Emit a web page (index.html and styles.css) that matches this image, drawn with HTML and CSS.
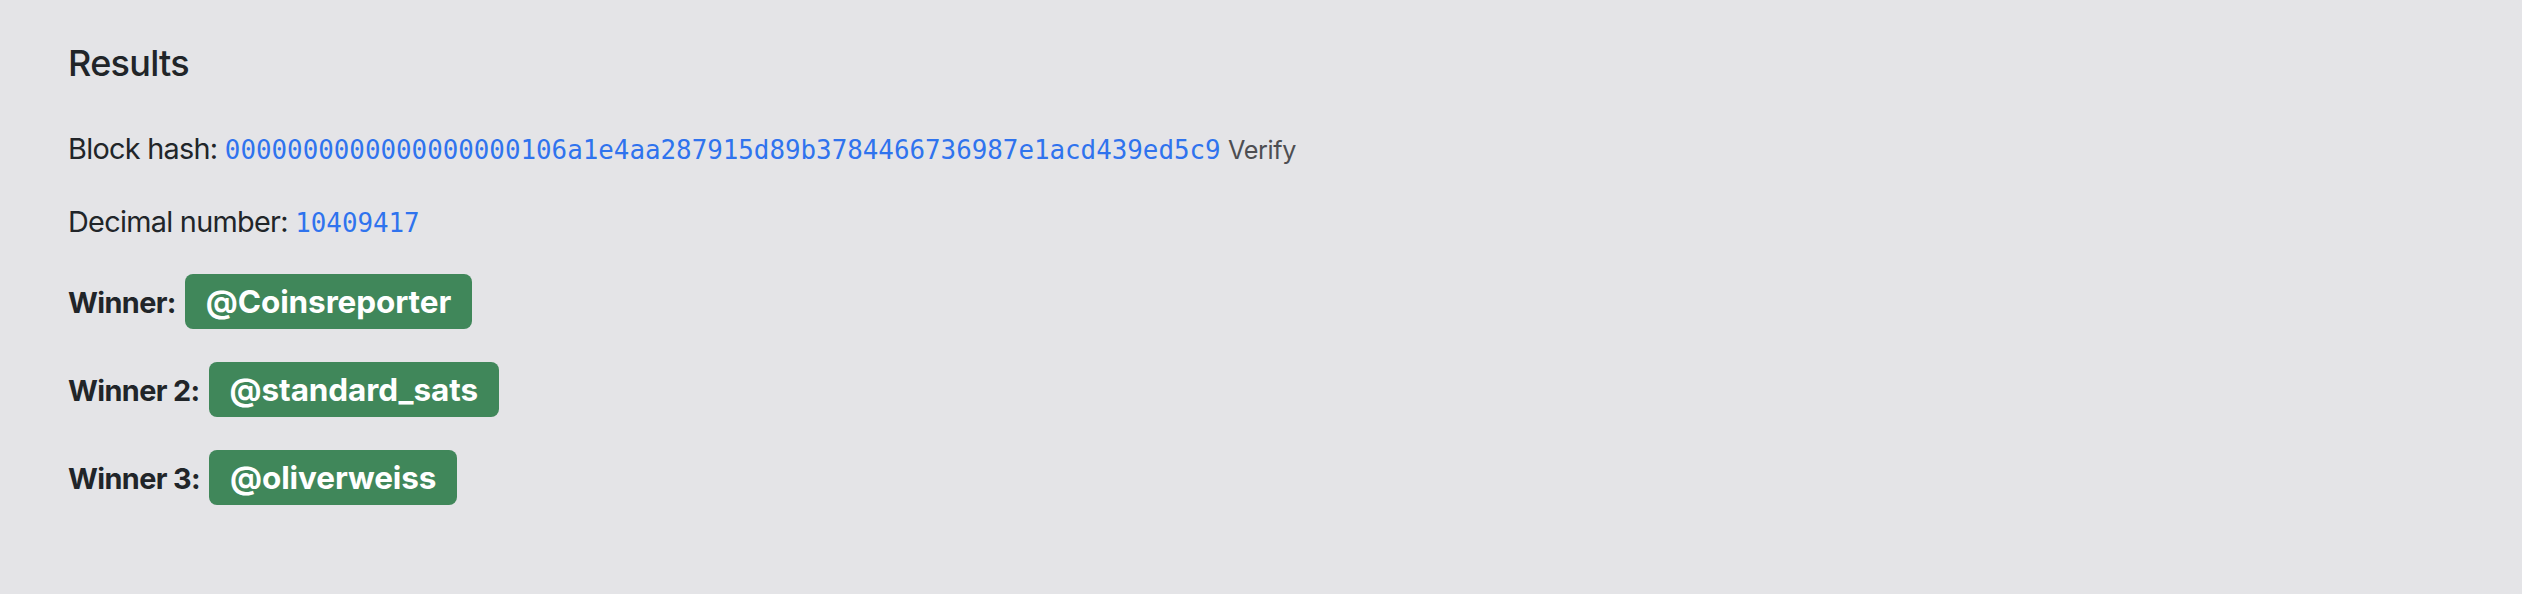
FILE: index.html
```html
<!DOCTYPE html>
<html lang="en">
<head>
<meta charset="utf-8">
<title>Results</title>
<link rel="stylesheet" href="styles.css">
</head>
<body>
<main class="results">
  <h5 class="results-title">Results</h5>
  <p class="line">Block hash: <code class="mono">0000000000000000000106a1e4aa287915d89b3784466736987e1acd439ed5c9</code> <a class="verify" href="#">Verify</a></p>
  <p class="line">Decimal number: <code class="mono">10409417</code></p>
  <div class="winner"><strong class="winner-label">Winner:</strong><span class="badge">@Coinsreporter</span></div>
  <div class="winner"><strong class="winner-label">Winner 2:</strong><span class="badge">@standard_sats</span></div>
  <div class="winner"><strong class="winner-label">Winner 3:</strong><span class="badge">@oliverweiss</span></div>
</main>
</body>
</html>
```
FILE: styles.css
```css
html, body {
  margin: 0;
  padding: 0;
  background: #e4e4e7;
}
body {
  font-family: Inter, "Noto Sans", "Liberation Sans", sans-serif;
  color: #212529;
  font-size: 28.8px;
  line-height: 43px;
  letter-spacing: -0.7px;
}
.results {
  padding: 42px 68px 0;
  display: flex;
  flex-direction: column;
  align-items: flex-start;
}
.results-title {
  margin: 0 0 42px;
  font-size: 36px;
  line-height: 43px;
  font-weight: 500;
  letter-spacing: -0.7px;
}
.line {
  margin: 0 0 28px;
}
.mono {
  font-family: "DejaVu Sans Mono", "Liberation Mono", monospace;
  font-size: 25.85px;
  letter-spacing: 0;
  color: #2f73ee;
}
.verify {
  color: #4d4e52;
  font-size: 25.2px;
  letter-spacing: -0.4px;
  text-decoration: none;
}
.winner {
  display: flex;
  align-items: baseline;
  gap: 9px;
  margin-top: 1px;
  margin-bottom: 32px;
}
.winner-label {
  font-weight: 700;
  letter-spacing: -0.6px;
}
.badge {
  display: inline-block;
  background: #40875a;
  color: #fff;
  font-weight: 700;
  font-size: 31.5px;
  line-height: 31px;
  letter-spacing: -0.1px;
  padding: 12px 21px;
  border-radius: 8px;
}
```
